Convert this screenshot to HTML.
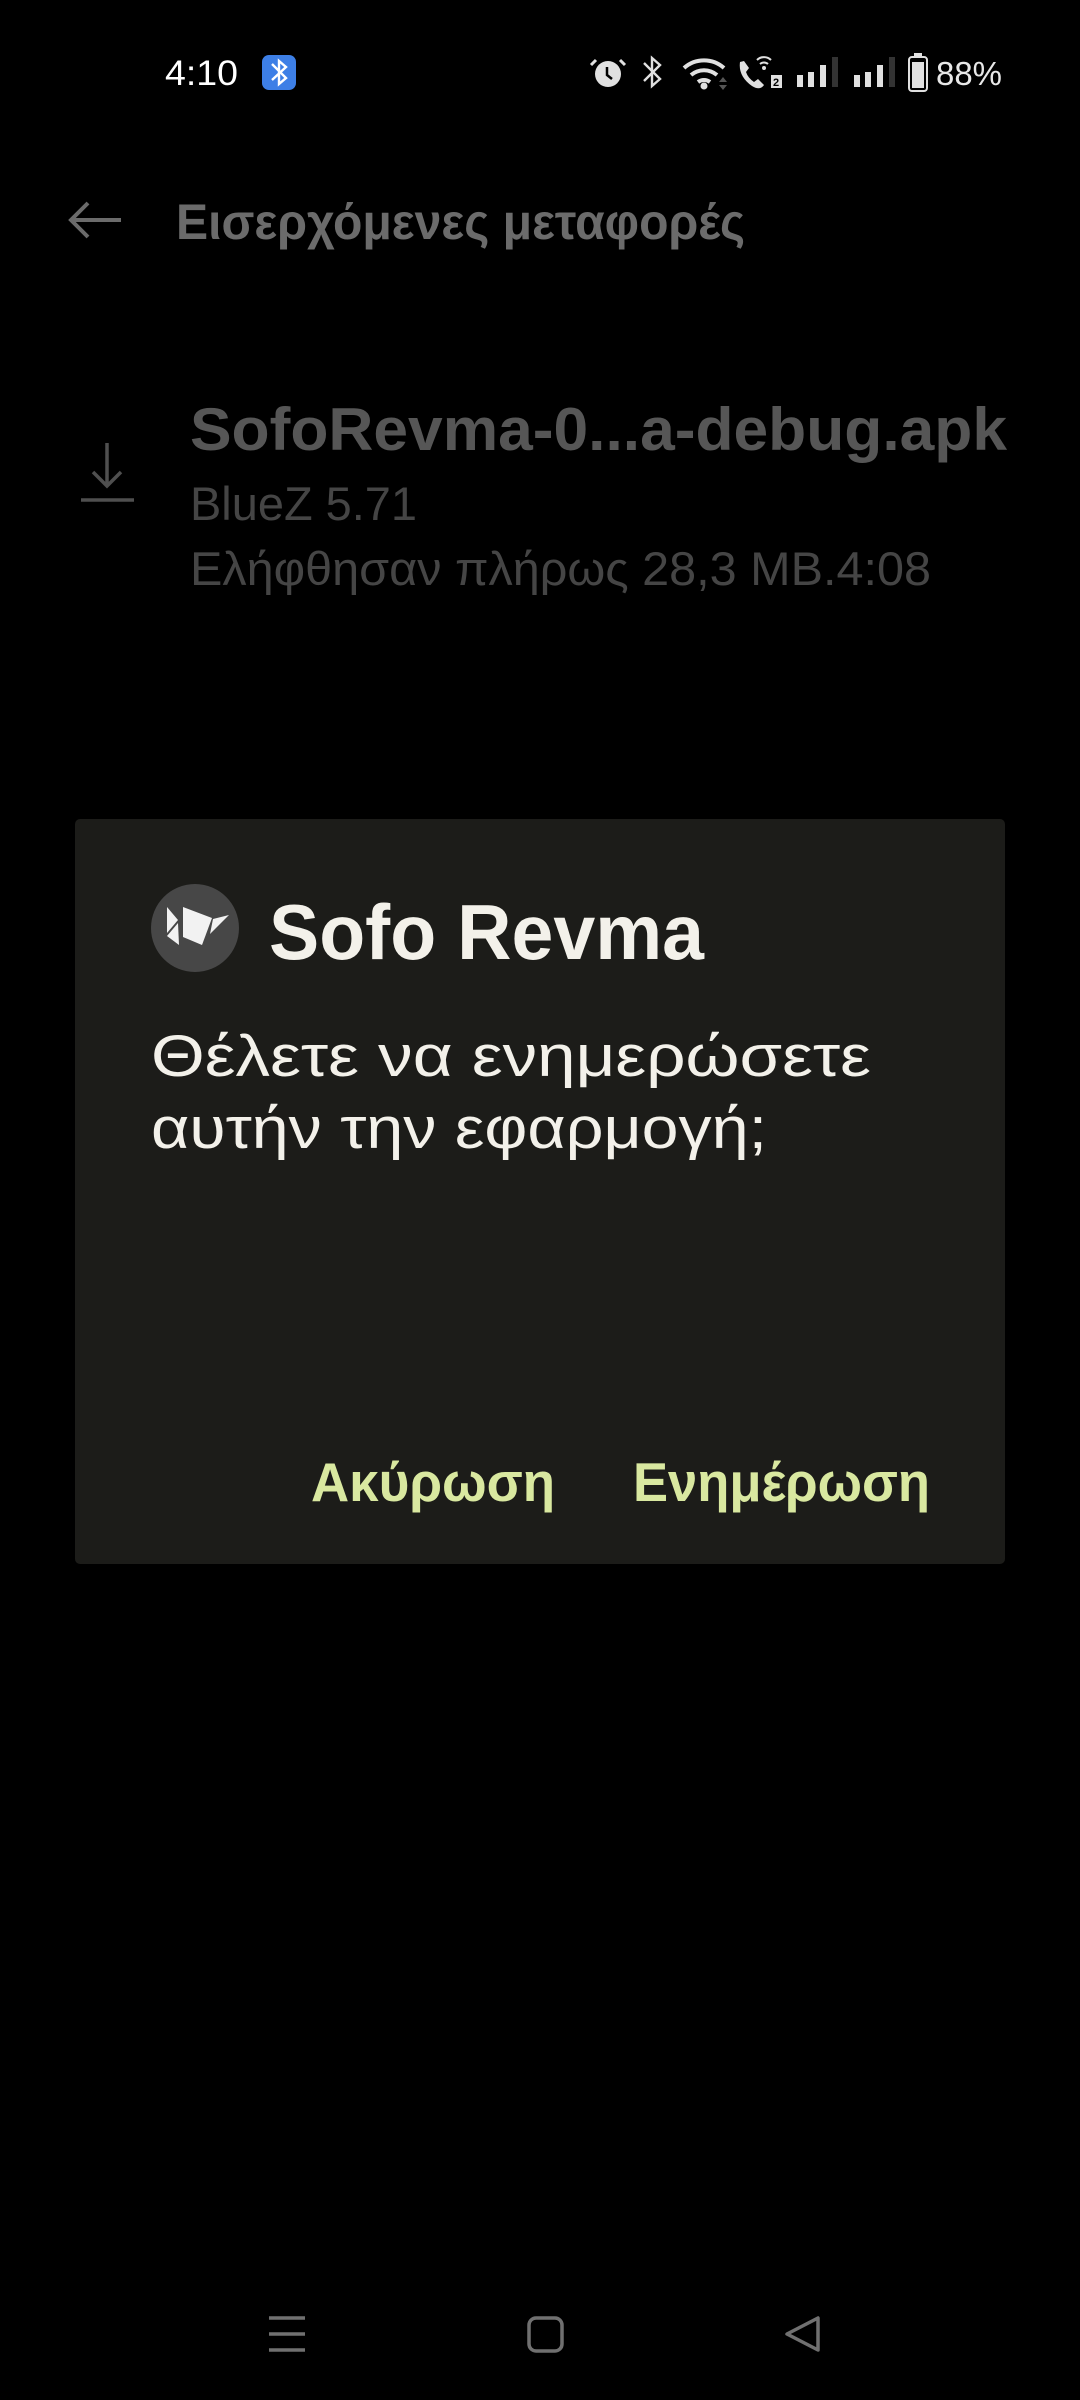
<!DOCTYPE html>
<html><head><meta charset="utf-8"><style>html,body{margin:0;padding:0;background:#000;}svg{display:block}</style></head>
<body>
<svg width="1080" height="2400" viewBox="0 0 1080 2400" xmlns="http://www.w3.org/2000/svg" font-family="Liberation Sans, sans-serif">
<rect width="1080" height="2400" fill="#000"/>
<!-- status bar -->
<text x="165" y="85" font-size="35" fill="#fff" textLength="73" lengthAdjust="spacingAndGlyphs">4:10</text>
<rect x="262" y="55" width="34" height="35" rx="7" fill="#3d7fe6"/>
<path d="M272 64 L286 78 L279 84 L279 61 L286 67 L272 80" fill="none" stroke="#fff" stroke-width="2.4"/>
<!-- alarm -->
<circle cx="608" cy="74" r="13" fill="#e0e0e0"/>
<path d="M596 60 L591 65 M620 60 L625 65" stroke="#e0e0e0" stroke-width="3"/>
<path d="M607 67 L607 75 L612 79" stroke="#000" stroke-width="2.5" fill="none"/>
<!-- bt -->
<path d="M644 63 L660 79 L652 86 L652 58 L660 65 L644 81" fill="none" stroke="#e0e0e0" stroke-width="2.4"/>
<!-- wifi -->
<path d="M684 68 A30 30 0 0 1 724 68" stroke="#e0e0e0" stroke-width="4" fill="none"/>
<path d="M691 75 A20 20 0 0 1 717 75" stroke="#e0e0e0" stroke-width="4" fill="none"/>
<path d="M698 82 A10 10 0 0 1 710 82" stroke="#e0e0e0" stroke-width="4" fill="none"/>
<circle cx="704" cy="86" r="3.5" fill="#e0e0e0"/>
<path d="M719 82 l4 -5 l4 5 z M719 85 l4 5 l4 -5 z" fill="#555"/>
<!-- call -->
<path d="M740 62 q-2 14 12 24 q8 5 12 -1 l-6 -6 l-4 3 q-6 -4 -8 -10 l3 -4 l-5 -7 z" fill="#e0e0e0"/>
<path d="M757 60 a10 10 0 0 1 14 0 M760 64 a6 6 0 0 1 8 0" stroke="#e0e0e0" stroke-width="2" fill="none"/>
<circle cx="764" cy="68" r="2" fill="#e0e0e0"/>
<rect x="771" y="75" width="11" height="13" fill="#e0e0e0"/>
<text x="773" y="86" font-size="11" font-weight="bold" fill="#000">2</text>
<!-- signal -->
<g fill="#e0e0e0"><rect x="797" y="75" width="6" height="12"/><rect x="808" y="72" width="6" height="15"/><rect x="820" y="65" width="6" height="22"/></g>
<rect x="832" y="57" width="6" height="30" fill="#333"/>
<g fill="#e0e0e0"><rect x="854" y="75" width="6" height="12"/><rect x="865" y="72" width="6" height="15"/><rect x="877" y="65" width="6" height="22"/></g>
<rect x="889" y="57" width="6" height="30" fill="#333"/>
<!-- battery -->
<rect x="914" y="53" width="8" height="3" fill="#e0e0e0"/>
<rect x="909" y="57" width="18" height="34" rx="3" fill="none" stroke="#e0e0e0" stroke-width="2"/>
<rect x="912" y="62" width="12" height="26" fill="#e0e0e0"/>
<text x="936" y="85" font-size="33" fill="#e8e8e8" textLength="66" lengthAdjust="spacingAndGlyphs">88%</text>

<!-- header -->
<path d="M72 220 L121 220 M88 203 L71 220 L88 237" stroke="#6b6b6b" stroke-width="4" fill="none"/>
<text x="176" y="239" font-size="50" font-weight="bold" fill="#6b6b6b" textLength="569" lengthAdjust="spacingAndGlyphs">Εισερχόμενες μεταφορές</text>

<!-- transfer item -->
<path d="M107 443 L107 486 M93 472 L107 486 L121 472 M81 500 L134 500" stroke="#4f4f4f" stroke-width="3.5" fill="none"/>
<text x="190" y="450" font-size="60" font-weight="bold" fill="#565656" textLength="817" lengthAdjust="spacingAndGlyphs">SofoRevma-0...a-debug.apk</text>
<text x="190" y="520" font-size="47" fill="#454545" textLength="227" lengthAdjust="spacingAndGlyphs">BlueZ 5.71</text>
<text x="190" y="585" font-size="47" fill="#454545" textLength="741" lengthAdjust="spacingAndGlyphs">Ελήφθησαν πλήρως 28,3 MB.4:08</text>

<!-- dialog -->
<rect x="75" y="819" width="930" height="745" rx="5" fill="#1c1c19"/>
<circle cx="195" cy="928" r="44" fill="#474747"/>
<g fill="#f2f2f2">
<polygon points="167,907 178,920 167,933"/>
<polygon points="167,936 178,923 179,945"/>
<polygon points="183,907 212,918 202,945 183,937"/>
<polygon points="213,919 229,915 210,934"/>
</g>
<text x="269" y="959" font-size="78" font-weight="bold" fill="#f3f1ea" textLength="435" lengthAdjust="spacingAndGlyphs">Sofo Revma</text>
<text x="151" y="1076" font-size="58" fill="#f3f1ea" textLength="720" lengthAdjust="spacingAndGlyphs">Θέλετε να ενημερώσετε</text>
<text x="151" y="1148" font-size="58" fill="#f3f1ea" textLength="616" lengthAdjust="spacingAndGlyphs">αυτήν την εφαρμογή;</text>
<text x="311" y="1501" font-size="55" font-weight="bold" fill="#d9e8a0" textLength="244" lengthAdjust="spacingAndGlyphs">Ακύρωση</text>
<text x="633" y="1501" font-size="55" font-weight="bold" fill="#d9e8a0" textLength="297" lengthAdjust="spacingAndGlyphs">Ενημέρωση</text>

<!-- nav bar -->
<path d="M269 2318 H305 M269 2334 H305 M269 2350 H305" stroke="#707070" stroke-width="3.5"/>
<rect x="529" y="2318" width="33" height="33" rx="7" fill="none" stroke="#707070" stroke-width="3.5"/>
<path d="M818 2318 L818 2350 L787 2334 Z" fill="none" stroke="#707070" stroke-width="3.5" stroke-linejoin="round"/>
</svg>
</body></html>
